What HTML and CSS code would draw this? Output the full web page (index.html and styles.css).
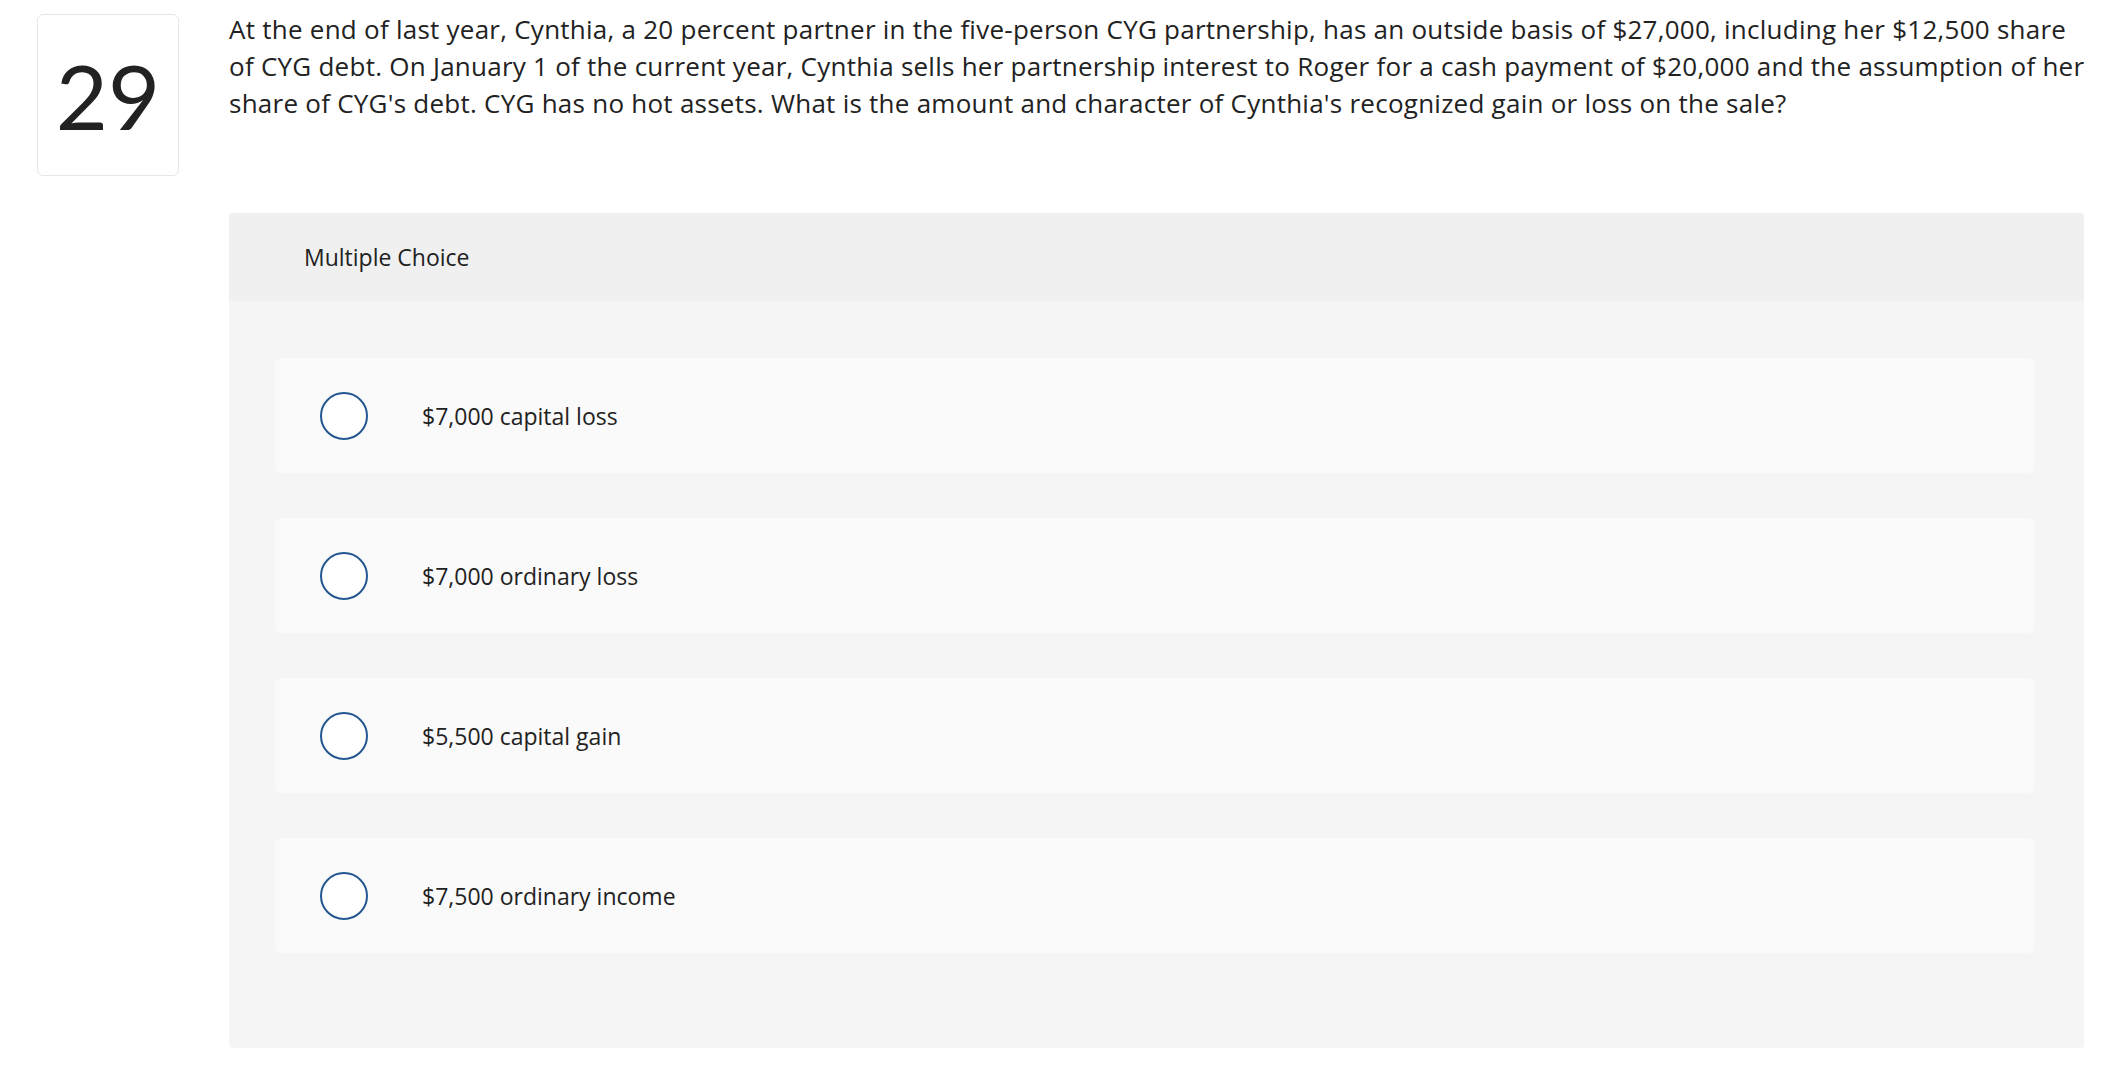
FILE: index.html
```html
<!DOCTYPE html>
<html>
<head>
<meta charset="utf-8">
<link rel="stylesheet" href="styles.css">
</head>
<body>
<div class="page">
  <div class="qnum">29</div>
  <p class="qtext">At the end of last year, Cynthia, a 20 percent partner in the five-person CYG partnership, has an outside basis of $27,000, including her $12,500 share<br>of CYG debt. On January 1 of the current year, Cynthia sells her partnership interest to Roger for a cash payment of $20,000 and the assumption of her<br>share of CYG's debt. CYG has no hot assets. What is the amount and character of Cynthia's recognized gain or loss on the sale?</p>
  <div class="panel">
    <div class="panel-head">Multiple Choice</div>
    <div class="options">
      <label class="option"><span class="radio"></span><span class="opt-text">$7,000 capital loss</span></label>
      <label class="option"><span class="radio"></span><span class="opt-text">$7,000 ordinary loss</span></label>
      <label class="option"><span class="radio"></span><span class="opt-text">$5,500 capital gain</span></label>
      <label class="option"><span class="radio"></span><span class="opt-text">$7,500 ordinary income</span></label>
    </div>
  </div>
</div>
</body>
</html>
```
FILE: styles.css
```css
html, body {
  margin: 0;
  padding: 0;
  background: #ffffff;
}
body {
  font-family: "Open Sans", "Lato", "Liberation Sans", sans-serif;
  color: #222222;
}
.page {
  display: grid;
  grid-template-columns: 142px 1855px;
  column-gap: 50px;
  padding: 14px 0 0 37px;
}
.qnum {
  grid-column: 1;
  grid-row: 1;
  height: 160px;
  border: 1px solid #e6e6e6;
  border-radius: 6px;
  display: flex;
  align-items: center;
  justify-content: center;
  font-family: "Lato", sans-serif;
  font-size: 90px;
  color: #222;
  font-weight: 400;
}
.qtext {
  grid-column: 2;
  grid-row: 1;
  margin: -3px 0 0 0;
  font-size: 26px;
  letter-spacing: 0.25px;
  line-height: 37px;
  white-space: nowrap;
  color: #222;
}
.panel {
  grid-column: 2;
  grid-row: 2;
  margin-top: 37px;
  height: 835px;
  background: #f5f5f5;
  border-radius: 4px;
  overflow: hidden;
}
.panel-head {
  height: 88px;
  background: #f0f0f0;
  display: flex;
  align-items: center;
  padding-left: 75px;
  font-size: 23px;
  color: #222;
}
.options {
  display: flex;
  flex-direction: column;
  gap: 45px;
  padding: 57px 50px 0 46px;
}
.option {
  height: 115px;
  background: #fafafa;
  border-radius: 6px;
  display: flex;
  align-items: center;
  padding-left: 45px;
}
.radio {
  width: 44px;
  height: 44px;
  border: 2px solid #24578f;
  border-radius: 50%;
  background: #ffffff;
  flex: none;
}
.opt-text {
  margin-left: 54px;
  font-size: 23px;
  color: #222;
}
```
